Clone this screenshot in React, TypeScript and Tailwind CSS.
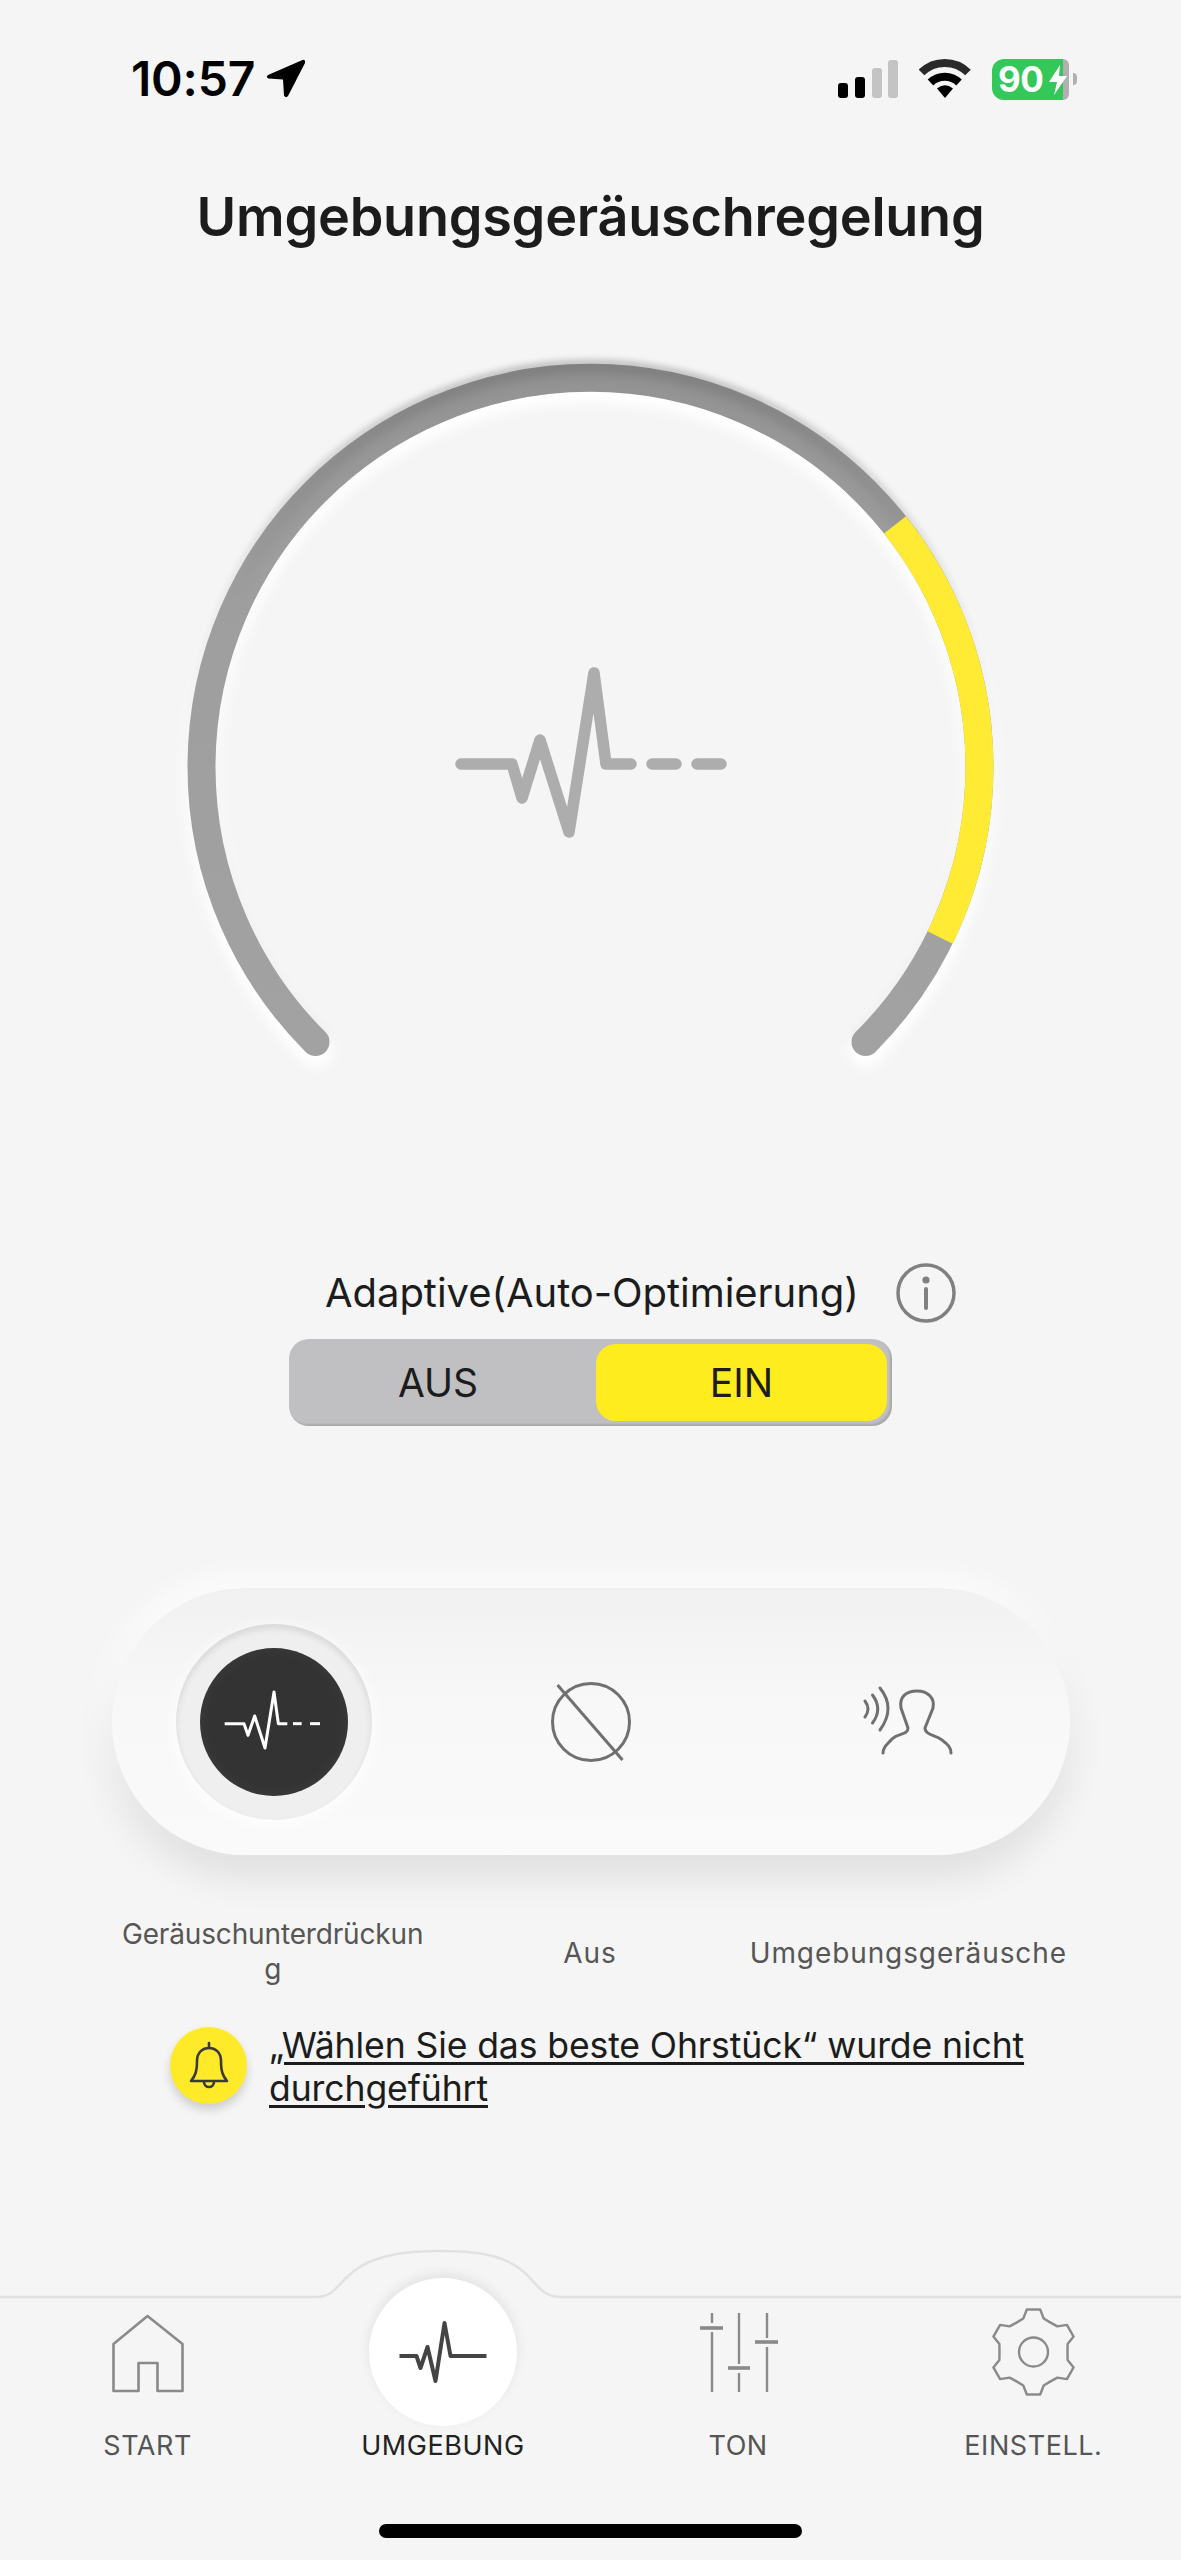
import React from "react";

function gearPath(cx: number, cy: number) {
  const pts: string[] = [];
  const outer = 43;
  const inner = 34;
  for (let i = 0; i < 6; i++) {
    const a = (i * 60 - 90) * (Math.PI / 180);
    const step = Math.PI / 180;
    const list: [number, number][] = [
      [inner + 1, a - 17 * step],
      [outer, a - 9 * step],
      [outer, a + 9 * step],
      [inner + 1, a + 17 * step],
      [inner, a + 30 * step],
    ];
    for (const [r, t] of list) {
      pts.push(`${(cx + r * Math.cos(t)).toFixed(1)} ${(cy + r * Math.sin(t)).toFixed(1)}`);
    }
  }
  return "M" + pts.join("L") + "Z";
}

function StatusBar() {
  return (
    <div className="flex h-[120px] justify-between pt-[58px] pr-[104px] pl-[131px]">
      <div className="flex h-[42px] items-center">
        <span className="text-[48px] leading-[42px] font-semibold tracking-[-0.2px] text-black">10:57</span>
        <svg width="40" height="40" viewBox="269 61 40 40" className="ml-[11px]">
          <path d="M305.5 62 L271 77 Q268.5 79 271.5 80.5 L286 81.5 L287 97.5 Q289 100.5 291 98 L308 65 Q308.5 61 305.5 62Z" fill="#000" />
        </svg>
      </div>
      <div className="flex h-[42px] items-center">
        <svg width="60" height="42" viewBox="838 58 60 42">
          <rect x="838" y="83" width="10" height="15" rx="3" fill="#000" />
          <rect x="855" y="77" width="10" height="21" rx="3" fill="#000" />
          <rect x="872" y="68" width="10" height="30" rx="3" fill="#c4c4c4" />
          <rect x="888" y="60" width="10" height="38" rx="3" fill="#c4c4c4" />
        </svg>
        <svg width="54" height="42" viewBox="919 58 54 42" className="ml-[21px]">
          <path d="M921.5 72.5 A33 33 0 0 1 968 72.5" fill="none" stroke="#2a2a2a" strokeWidth="8" />
          <path d="M930.5 82.5 A20.5 20.5 0 0 1 959 82.5" fill="none" stroke="#000" strokeWidth="8" />
          <path d="M937 88.5 Q945 82 953 88.5 L945 98 Z" fill="#000" />
        </svg>
        <div className="relative ml-[19px] flex h-[41px] w-[77px]">
          <div className="flex flex-1 items-center rounded-l-[12px] bg-[#34c759] pl-[6px]">
            <span className="text-[35px] leading-[41px] font-bold tracking-[-0.5px] text-white">90</span>
          </div>
          <div className="w-[6px] rounded-r-[6px] bg-[#b0b0b0]" />
          <svg width="20" height="32" viewBox="0 0 20 32" className="absolute top-[5px] left-[56px]">
            <path d="M12 1 L1 18 L9 18 L6 31 L19 12 L11 12 Z" fill="#fff" />
          </svg>
        </div>
        <div className="ml-[4px] h-[12px] w-[4px] rounded-r-[4px] bg-[#b0b0b0]" />
      </div>
    </div>
  );
}

function Gauge() {
  const full = "M315.5 1042 A389 389 0 1 1 865.5 1042";
  const yellow = "M895 524.9 A389 389 0 0 1 940.1 937.5";
  return (
    <svg width="880" height="760" viewBox="150 330 880 760" className="ml-[150px] block">
      <defs>
        <linearGradient id="grey" gradientUnits="userSpaceOnUse" x1="0" y1="360" x2="0" y2="1050">
          <stop offset="0" stopColor="#929292" />
          <stop offset="0.3" stopColor="#9e9e9e" />
          <stop offset="1" stopColor="#a2a2a2" />
        </linearGradient>
        <linearGradient id="fade" gradientUnits="userSpaceOnUse" x1="0" y1="355" x2="0" y2="620">
          <stop offset="0" stopColor="#000" stopOpacity="0.16" />
          <stop offset="1" stopColor="#000" stopOpacity="0" />
        </linearGradient>
        <linearGradient id="rim" gradientUnits="userSpaceOnUse" x1="0" y1="355" x2="0" y2="1050">
          <stop offset="0" stopColor="#000" stopOpacity="0.26" />
          <stop offset="0.45" stopColor="#000" stopOpacity="0.1" />
          <stop offset="1" stopColor="#000" stopOpacity="0.04" />
        </linearGradient>
        <filter id="b6" x="-10%" y="-10%" width="120%" height="120%">
          <feGaussianBlur stdDeviation="6" />
        </filter>
        <filter id="b3" x="-10%" y="-10%" width="120%" height="120%">
          <feGaussianBlur stdDeviation="3" />
        </filter>
        <mask id="arcMask" maskUnits="userSpaceOnUse" x="150" y="330" width="880" height="760">
          <path d={full} fill="none" stroke="#fff" strokeWidth="28" strokeLinecap="round" />
        </mask>
      </defs>
      <path d={full} transform="translate(0 -3)" fill="none" stroke="url(#rim)" strokeWidth="30" strokeLinecap="round" filter="url(#b3)" />
      <path d={full} transform="translate(0 8)" fill="none" stroke="#fff" strokeWidth="34" strokeLinecap="round" filter="url(#b6)" />
      <path d={full} fill="none" stroke="url(#grey)" strokeWidth="28" strokeLinecap="round" />
      <g mask="url(#arcMask)">
        <path d={full} transform="translate(0 -12)" fill="none" stroke="url(#fade)" strokeWidth="14" filter="url(#b6)" />
      </g>
      <path d={yellow} fill="none" stroke="#ffeb33" strokeWidth="28" />
      <g fill="none" stroke="#adadad" strokeWidth="11.5" strokeLinecap="round" strokeLinejoin="round">
        <path d="M461 764 H512 L522 798 L540 740 L569 832 L594 673 L606 764 H631" />
        <path d="M652 764 H676" />
        <path d="M697 764 H721" />
      </g>
    </svg>
  );
}

function AdaptiveToggle() {
  return (
    <div>
      <div className="mt-[170px] flex h-[66px] items-center pl-[325px]">
        <span className="w-[530px] text-center text-[40px] leading-[60px] tracking-[-0.05px] whitespace-nowrap text-[#1c1c1c]">
          Adaptive(Auto-Optimierung)
        </span>
        <svg width="60" height="60" viewBox="0 0 60 60" className="ml-[41px]">
          <circle cx="30" cy="30" r="28" fill="none" stroke="#808080" strokeWidth="3.5" />
          <circle cx="30" cy="17" r="3.6" fill="#808080" />
          <path d="M30 26 V45" stroke="#808080" strokeWidth="4" strokeLinecap="round" />
        </svg>
      </div>
      <div className="mt-[13px] ml-[289px] flex h-[87px] w-[603px] items-center rounded-[20px] bg-[#c0c0c2] pr-[5px] shadow-[inset_-2px_-2px_2px_rgba(0,0,0,0.12)]">
        <span className="flex-1 pr-[9px] text-center text-[39px] leading-[77px] text-[#1c1c1c]">AUS</span>
        <span className="w-[291px] rounded-[20px] bg-[#ffec1f] text-center text-[39px] leading-[77px] text-[#1c1c1c]">EIN</span>
      </div>
    </div>
  );
}

function ModePill() {
  return (
    <div>
      <div className="mt-[162px] ml-[112px] grid h-[267px] w-[958px] grid-cols-3 items-center rounded-[134px] bg-[linear-gradient(180deg,#f1f1f1_0%,#f8f8f8_45%,#fafafa_100%)] px-[3px] shadow-[0_22px_38px_rgba(0,0,0,0.09),-6px_-10px_30px_rgba(255,255,255,0.9)]">
        <div className="flex justify-center">
          <div className="flex h-[196px] w-[196px] items-center justify-center rounded-full bg-[#efefef] shadow-[inset_0_4px_7px_rgba(0,0,0,0.1),0_4px_18px_rgba(255,255,255,0.95)]">
            <div className="h-[148px] w-[148px] rounded-full bg-[radial-gradient(circle,#333333_62%,#454545_100%)]">
              <svg width="148" height="148" viewBox="118 148 444 444" className="block">
                <g fill="none" stroke="#fff" strokeWidth="9" strokeLinejoin="round">
                  <path d="M192 375 H250 L262 410 L282 352 L313 448 L340 280 L353 375 H380" />
                  <path d="M397 375 H423" />
                  <path d="M448 375 H478" />
                </g>
              </svg>
            </div>
          </div>
        </div>
        <div className="flex justify-center">
          <svg width="100" height="100" viewBox="540.5 1672 100 100">
            <ellipse cx="590.5" cy="1722" rx="38.5" ry="38.5" fill="none" stroke="#707070" strokeWidth="3" />
            <path d="M557 1685 L622 1760" stroke="#707070" strokeWidth="3" />
          </svg>
        </div>
        <div className="flex justify-center">
          <svg width="100" height="100" viewBox="858 1672 100 100">
            <g fill="none" stroke="#707070" strokeWidth="3" strokeLinecap="round">
              <path d="M883 1753 C883 1746 888 1744 892 1739 C898 1733 908 1735 908 1728 L901 1708 C899 1697 906 1691 917 1691 C928 1691 935 1698 933 1708 L925 1728 C925 1735 936 1735 942 1740 C947 1744 951 1747 951 1753" />
              <path d="M880 1688 Q896 1708 880 1730" />
              <path d="M872.5 1695 Q883 1709 872.5 1723" />
              <path d="M865 1701 Q871 1709 865 1717" />
            </g>
          </svg>
        </div>
      </div>
      <div className="mt-[63px] ml-[112px] grid h-[70px] w-[958px] grid-cols-3 items-center px-[3px] text-center text-[28px] leading-[35px] whitespace-nowrap text-[#565656]">
        <div className="-translate-x-[1px] -translate-y-px tracking-[-0.15px]">
          Geräuschunterdrückun
          <br />g
        </div>
        <div className="-translate-x-[1px] tracking-[1px]">Aus</div>
        <div className="tracking-[0.9px]">Umgebungsgeräusche</div>
      </div>
    </div>
  );
}

function Notice() {
  return (
    <div className="mt-[39px] ml-[170px] flex items-start gap-[22px]">
      <div className="flex h-[77px] w-[77px] items-center justify-center rounded-full bg-[#ffea2a] shadow-[0_6px_10px_rgba(0,0,0,0.16)]">
        <svg width="50" height="50" viewBox="184 2040 50 50">
          <g fill="none" stroke="#3a3a3a" strokeWidth="2.6" strokeLinejoin="round" strokeLinecap="round">
            <path d="M191 2080 C195 2075 197 2071 197 2060 C197 2051 203 2047 209 2047 C215 2047 221 2051 221 2060 C221 2071 223 2075 227 2080 Z" />
            <path d="M209 2047 V2042" />
            <path d="M204 2081 A5 5 0 0 0 214 2081" />
          </g>
        </svg>
      </div>
      <div className="-mt-[3px] text-[35.6px] leading-[43px] tracking-[-0.12px] whitespace-nowrap text-[#1c1c1c] underline underline-offset-[4px]">
        „Wählen Sie das beste Ohrstück“ wurde nicht
        <br />
        durchgeführt
      </div>
    </div>
  );
}

function TabBar() {
  const line = "M0 2297 H316 C331 2297 336 2288 346 2278 C365 2258 395 2251 441 2251 C487 2251 512 2258 530 2278 C541 2290 546 2297 561 2297 H1181";
  return (
    <div className="relative mt-[187px] h-[263px]">
      <svg width="1181" height="60" viewBox="0 2240 1181 60" className="absolute top-[-57px] left-0">
        <path d={line} fill="none" stroke="#e1e1e1" strokeWidth="2.5" />
      </svg>
      <div className="relative grid grid-cols-4 pt-[5px] text-center text-[27px] leading-[34px] tracking-[0.55px] text-[#555]">
        <div className="flex flex-col items-center">
          <svg width="100" height="100" viewBox="97.5 2302 100 100">
            <path d="M147 2316 L113 2344 V2391 H138 V2363 H157 V2391 H182 V2344 Z" fill="none" stroke="#8a8a8a" strokeWidth="2.6" strokeLinejoin="round" />
          </svg>
          <span className="mt-[27px]">START</span>
        </div>
        <div className="flex flex-col items-center">
          <div className="relative h-[100px] w-[100px]">
            <div className="absolute top-[-24px] left-[-24px] h-[148px] w-[148px] rounded-full bg-white shadow-[0_-4px_12px_rgba(0,0,0,0.08)]" />
            <svg width="100" height="100" viewBox="392.5 2302 100 100" className="relative">
              <path d="M399 2356 H416 L420 2368 L427 2347 L435 2381 L444 2323 L450 2356 H486" fill="none" stroke="#444" strokeWidth="4" strokeLinejoin="round" />
            </svg>
          </div>
          <span className="mt-[27px] text-[#222]">UMGEBUNG</span>
        </div>
        <div className="flex flex-col items-center">
          <svg width="100" height="100" viewBox="688 2302 100 100">
            <g stroke="#8a8a8a" strokeWidth="2.4" fill="none">
              <path d="M712 2313 V2323 M712 2332 V2392" />
              <path d="M739 2313 V2364 M739 2373 V2392" />
              <path d="M767 2313 V2338 M767 2347 V2392" />
            </g>
            <g stroke="#8a8a8a" strokeWidth="3.6" fill="none">
              <path d="M700 2328 H723" />
              <path d="M728 2368 H750" />
              <path d="M755 2342 H778" />
            </g>
          </svg>
          <span className="mt-[27px]">TON</span>
        </div>
        <div className="flex flex-col items-center">
          <svg width="100" height="100" viewBox="983.5 2302 100 100">
            <path d={gearPath(1034, 2352)} fill="none" stroke="#8a8a8a" strokeWidth="2.4" strokeLinejoin="round" />
            <circle cx="1034" cy="2352" r="14.5" fill="none" stroke="#8a8a8a" strokeWidth="2.4" />
          </svg>
          <span className="mt-[27px]">EINSTELL.</span>
        </div>
      </div>
      <div className="mx-auto mt-[61px] h-[14px] w-[423px] rounded-full bg-black" />
    </div>
  );
}

export default function App() {
  return (
    <div className="h-[2560px] w-[1181px] overflow-hidden bg-[#f5f5f5] [font-family:Inter,sans-serif]">
      <StatusBar />
      <h1 className="h-[210px] pt-[62px] text-center text-[54px] leading-[70px] font-semibold tracking-[-0.25px] text-[#1c1c1c]">
        Umgebungsgeräuschregelung
      </h1>
      <Gauge />
      <AdaptiveToggle />
      <ModePill />
      <Notice />
      <TabBar />
    </div>
  );
}
